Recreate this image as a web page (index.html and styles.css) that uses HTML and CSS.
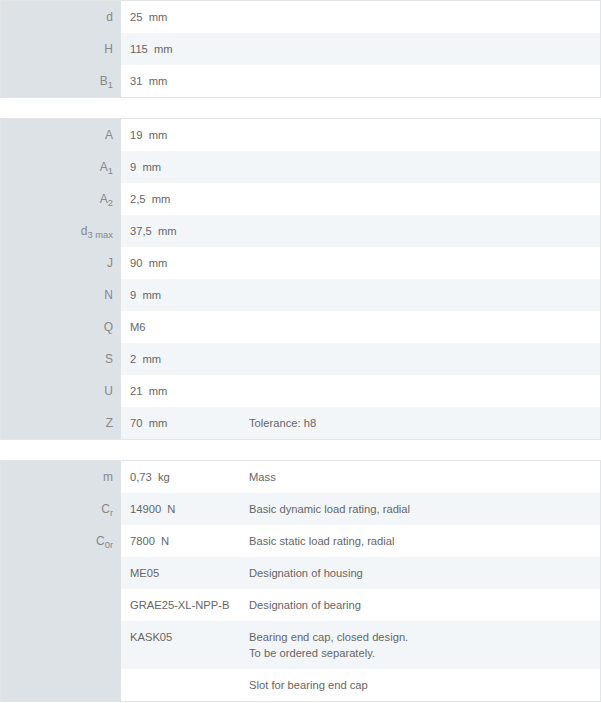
FILE: index.html
```html
<!DOCTYPE html>
<html lang="en">
<head>
  <meta charset="UTF-8">
  <title>Housing dimensions</title>
  <link rel="stylesheet" href="styles.css">
</head>
<body>
  <div class="specs">
    <table class="spec-table">
      <tr><th>d</th><td class="val">25&nbsp; mm</td><td></td></tr>
      <tr><th>H</th><td class="val">115&nbsp; mm</td><td></td></tr>
      <tr><th>B<sub>1</sub></th><td class="val">31&nbsp; mm</td><td></td></tr>
    </table>

    <table class="spec-table">
      <tr><th>A</th><td class="val">19&nbsp; mm</td><td></td></tr>
      <tr><th>A<sub>1</sub></th><td class="val">9&nbsp; mm</td><td></td></tr>
      <tr><th>A<sub>2</sub></th><td class="val">2,5&nbsp; mm</td><td></td></tr>
      <tr><th>d<sub>3 max</sub></th><td class="val">37,5&nbsp; mm</td><td></td></tr>
      <tr><th>J</th><td class="val">90&nbsp; mm</td><td></td></tr>
      <tr><th>N</th><td class="val">9&nbsp; mm</td><td></td></tr>
      <tr><th>Q</th><td class="val">M6</td><td></td></tr>
      <tr><th>S</th><td class="val">2&nbsp; mm</td><td></td></tr>
      <tr><th>U</th><td class="val">21&nbsp; mm</td><td></td></tr>
      <tr><th>Z</th><td class="val">70&nbsp; mm</td><td>Tolerance: h8</td></tr>
    </table>

    <table class="spec-table">
      <tr><th>m</th><td class="val">0,73&nbsp; kg</td><td>Mass</td></tr>
      <tr><th>C<sub>r</sub></th><td class="val">14900&nbsp; N</td><td>Basic dynamic load rating, radial</td></tr>
      <tr><th>C<sub>0r</sub></th><td class="val">7800&nbsp; N</td><td>Basic static load rating, radial</td></tr>
      <tr><th></th><td class="val">ME05</td><td>Designation of housing</td></tr>
      <tr><th></th><td class="val">GRAE25-XL-NPP-B</td><td>Designation of bearing</td></tr>
      <tr><th></th><td class="val">KASK05</td><td>Bearing end cap, closed design.<br>To be ordered separately.</td></tr>
      <tr><th></th><td class="val"></td><td>Slot for bearing end cap</td></tr>
    </table>
  </div>
</body>
</html>
```

FILE: styles.css
```css
/* General */
body {
  margin: 0;
  font-family: Arial, "Liberation Sans", sans-serif;
  font-size: 11.2px;
  color: #666;
  background-color: #fff;
}

.specs {
  display: flex;
  flex-direction: column;
  gap: 20px;
}

/* Spec tables */
.spec-table {
  width: 100%;
  border-collapse: collapse;
  border: 1px solid #e2e4e6;
}

.spec-table th,
.spec-table td {
  height: 16px;
  padding: 8px 8px 8px 9px;
  line-height: 16px;
  vertical-align: top;
  text-align: left;
}

.spec-table th {
  width: 103px;
  padding-right: 8px;
  text-align: right;
  font-size: 12px;
  font-weight: normal;
  color: #878787;
  background-color: #dde2e7;
}

.spec-table .val {
  width: 102px;
}

.spec-table tr:nth-child(even) td {
  background-color: #f3f6f8;
}

.spec-table sub {
  font-size: 0.78em;
  line-height: 0;
  vertical-align: -0.3em;
}
```
